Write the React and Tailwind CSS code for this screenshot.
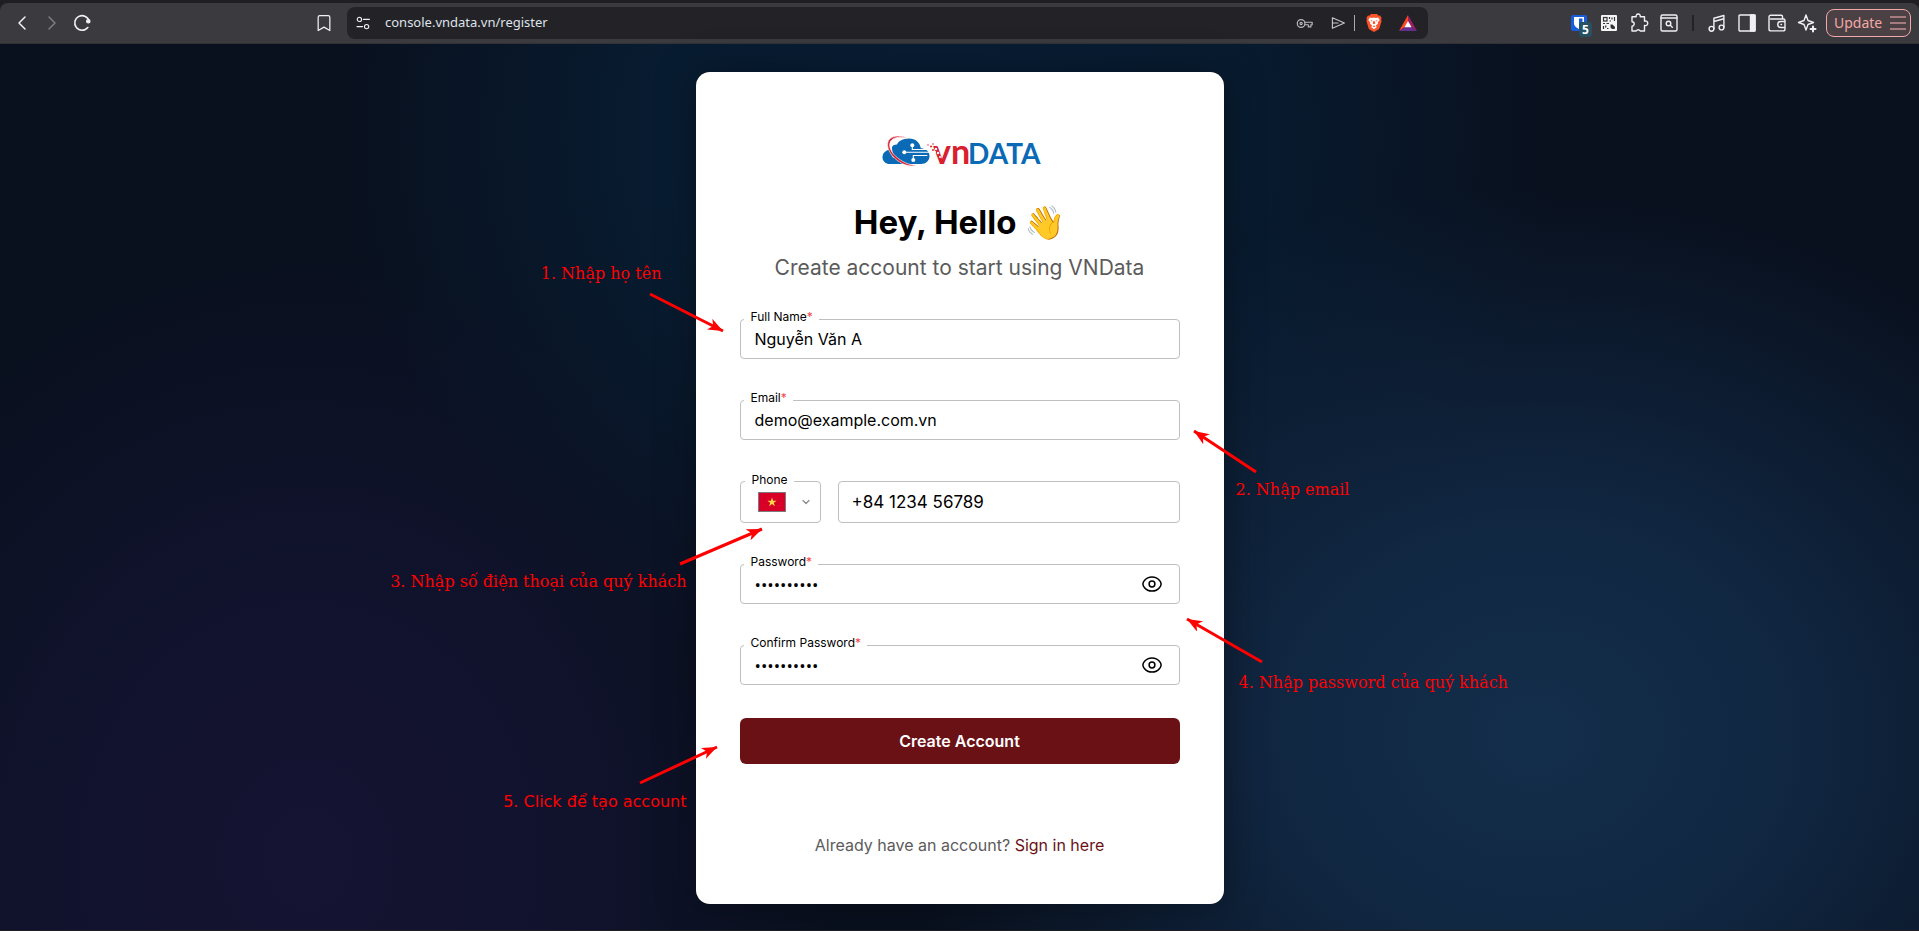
import React, {useState} from 'react';
import {Bookmark, ChevronDown, ChevronLeft, ChevronRight} from 'lucide-react';

function ToolButton({label, className = 'w-[30px]', children}) {
  return (
    <button
      aria-label={label}
      className={`flex h-8 shrink-0 items-center justify-center text-[#f0f0f3] ${className}`}
    >
      {children}
    </button>
  );
}

function Stroke({children, className = 'h-5 w-5'}) {
  return (
    <svg
      className={className}
      viewBox="0 0 20 20"
      fill="none"
      stroke="currentColor"
      strokeWidth="1.4"
      strokeLinecap="round"
      strokeLinejoin="round"
    >
      {children}
    </svg>
  );
}

function BraveIcon() {
  return (
    <svg className="h-[18px] w-4" viewBox="0 0 16 18">
      <path
        d="M5 0h6l1.600 1.800 1.500-.2L15.600 4l-.5 1.600.5 1.500-2.200 7.200c-.2.6-.6 1-1 1.300L8 18l-4.400-2.400c-.4-.3-.8-.7-1-1.300L.4 7.100l.5-1.500L.4 4l1.500-2.400 1.500.2z"
        fill="#fb542b"
      />
      <path
        d="M4 3.600l2.200.3L8 3.500l1.800.4 2.200-.3 1.700 2.300-2 2.600.3 1.300-2.200 1.700 1 1.400L8 15.200l-2.800-2.300 1-1.400L4 9.800l.3-1.300-2-2.600z"
        fill="#fff"
      />
      <path
        d="M4.300 6l2 .5-.2 1.200zM11.700 6l-2 .5.2 1.200zM7.100 7.200h1.800l.4 2.200L8 10.300l-1.300-.9zM6.500 12.300L8 11.600l1.500.7L8 13.200z"
        fill="#fb542b"
      />
    </svg>
  );
}

function BatIcon() {
  return (
    <svg className="h-4 w-[18px]" viewBox="0 0 18 16">
      <path d="M9 0L0 16l6-4 3-5z" fill="#ff4724" />
      <path d="M9 0l9 16-6-4-3-5z" fill="#9e1f63" />
      <path d="M0 16h18l-6-4H6z" fill="#662d91" />
      <path d="M9 6l3.600 6.200H5.400z" fill="#fff" />
    </svg>
  );
}

function BitwardenIcon() {
  return (
    <span className="relative">
      <svg className="h-4 w-4" viewBox="0 0 16 16">
        <rect width="16" height="16" rx="2" fill="#175ddc" />
        <path
          d="M3 2h10v6.500c0 2.500-2.500 4.300-5 5.500-2.500-1.200-5-3-5-5.500z"
          fill="#fff"
        />
        <path d="M8 3.500h3.500v5c0 1.500-1.600 2.900-3.500 3.900z" fill="#175ddc" />
      </svg>
      <span className="absolute top-[7px] left-2 rounded-[3px] bg-[#275063] px-[3px] text-[12px] leading-[15px] font-bold text-white">
        5
      </span>
    </span>
  );
}

function QrIcon() {
  return (
    <svg className="h-4 w-4" viewBox="0 0 16 16">
      <rect width="16" height="16" rx="1" fill="#f5f5f7" />
      <g fill="none" stroke="#333236" strokeWidth="1.2">
        <rect x="2.5" y="2.5" width="3.500" height="3.500" />
        <path d="M8.500 2v2M8.500 6h1.500M11 2.500v2M13.500 2v4M2 8.500h2M5.500 8.500h2.500M2.500 11v3M5 10.500l-.5 2M6 13.500h1.500" />
      </g>
      <path d="M9.500 9.500h2l2.500 2.500v1.500l-1 .5h-2l-1.500-1.500z" fill="#333236" />
    </svg>
  );
}

function BrowserBar() {
  return (
    <div className="bg-[#1f1e23] pt-[3px]">
      <header className="flex h-[41px] items-center rounded-t-lg border-b border-[#323136] bg-[#3b3a3f] font-['Noto_Sans',sans-serif]">
        <div className="flex w-[347px] shrink-0 items-center pr-2 pl-[7px]">
          <ToolButton label="Back">
            <ChevronLeft size={24} strokeWidth={1.5} />
          </ToolButton>
          <button
            aria-label="Forward"
            disabled
            className="flex h-8 w-[30px] items-center justify-center text-[#7d7c82]"
          >
            <ChevronRight size={24} strokeWidth={1.5} />
          </button>
          <ToolButton label="Reload">
            <Stroke>
              <path d="M15.800 14.500A7.300 7.300 0 1 1 17.200 8.500" strokeWidth="1.6" />
              <circle cx="16.3" cy="8.3" r="1.6" fill="currentColor" />
            </Stroke>
          </ToolButton>
          <div className="flex-1" />
          <ToolButton label="Bookmark this tab">
            <Bookmark size={20} strokeWidth={1.5} />
          </ToolButton>
        </div>

        <div className="flex h-8 min-w-0 flex-1 items-center rounded-lg bg-[#232227] pr-[3px]">
          <ToolButton label="Site information" className="w-8">
            <Stroke className="h-4 w-4">
              <circle cx="5.5" cy="5.5" r="2.7" />
              <path d="M10.500 5.500H18" />
              <circle cx="14.5" cy="14.5" r="2.7" />
              <path d="M2.500 14.500H9.500" />
            </Stroke>
          </ToolButton>
          <input
            aria-label="Address"
            defaultValue="console.vndata.vn/register"
            className="h-8 min-w-0 flex-1 bg-transparent pb-0.5 pl-1.5 text-[13px] text-[#dfe3ea] outline-none"
          />
          <div className="flex gap-0.5">
            <ToolButton label="Passwords" className="w-8">
              <Stroke className="h-[17px] w-[17px] text-[#b9b9be]">
                <circle cx="6" cy="10" r="4.5" />
                <circle cx="6" cy="10" r="1.3" />
                <path d="M10.500 8.500H19v3h-1.500v2.500h-3v-2.500h-4" />
              </Stroke>
            </ToolButton>
            <ToolButton label="Send to your devices" className="w-8">
              <Stroke className="h-4 w-4 text-[#c8c8cc]">
                <path d="M3 3.500L18 10 3 16.500zM3 10h7" />
              </Stroke>
            </ToolButton>
          </div>
          <div className="mr-0.5 h-4 w-px bg-[#a9a9ad]" />
          <ToolButton label="Brave Shields" className="w-[34px]">
            <BraveIcon />
          </ToolButton>
          <ToolButton label="Brave Rewards" className="w-[34px]">
            <BatIcon />
          </ToolButton>
        </div>

        <div className="flex w-[491px] shrink-0 items-center justify-end pr-2">
          <ToolButton label="Bitwarden">
            <BitwardenIcon />
          </ToolButton>
          <ToolButton label="QR code">
            <QrIcon />
          </ToolButton>
          <ToolButton label="Extensions">
            <Stroke>
              <path d="M3 3.800h4.200a2.100 2.100 0 1 1 4 0h4.300v4.400a2.300 2.300 0 1 1 0 4.200v5.600h-4.300a2.200 2.200 0 0 0-4 0H3v-4.800a2.200 2.200 0 1 0 0-4.400z" />
            </Stroke>
          </ToolButton>
          <ToolButton label="Search tabs">
            <Stroke>
              <rect x="2" y="2" width="16" height="16" rx="1.5" />
              <path d="M2 5h16" />
              <circle cx="9.5" cy="10.5" r="2.3" />
              <path d="M11.300 12.300l2 2" />
            </Stroke>
          </ToolButton>
          <div className="mx-2 h-4 w-0.5 bg-[#232227]" />
          <ToolButton label="Playlist">
            <Stroke>
              <circle cx="4.5" cy="15.8" r="2.4" />
              <circle cx="14.5" cy="14.5" r="2.4" />
              <path d="M6.900 15.800V5.200L16.900 2.500v12M6.900 8.500l10-2.700" />
            </Stroke>
          </ToolButton>
          <ToolButton label="Sidebar">
            <Stroke>
              <rect x="2" y="2" width="16" height="16" rx="1" />
              <path d="M13.500 2H18v16h-4.500z" fill="currentColor" />
            </Stroke>
          </ToolButton>
          <ToolButton label="Wallet">
            <Stroke>
              <path d="M15.500 6V3.500A1.300 1.300 0 0 0 14.200 2.200H3.700a1.700 1.700 0 0 0-1.700 1.700v12a2 2 0 0 0 2 2h12a2 2 0 0 0 2-2V7.500A1.500 1.500 0 0 0 16.500 6H3.500M18 8.500h-4.200a3 3 0 0 0 0 6H18zM14 11.500h.5" />
            </Stroke>
          </ToolButton>
          <ToolButton label="Leo AI">
            <Stroke>
              <path d="M9 2l2 5.500L16.500 9.500 11 11.500 9 17 7 11.500 1.500 9.500 7 7.500z" />
              <path d="M16 13.500v5M13.500 16h5" strokeWidth="2" />
            </Stroke>
          </ToolButton>
          <button className="ml-1 flex h-7 w-[85px] items-center justify-between rounded-lg border border-[#f2a9a7] bg-[#4b4044] pr-1 pl-[7px] text-sm text-[#f2a9a7]">
            Update
            <svg className="h-4 w-4" viewBox="0 0 16 16" stroke="#c48f90" strokeWidth="1.5">
              <path d="M0 2h16M0 8h16M0 14h16" />
            </svg>
          </button>
        </div>
      </header>
    </div>
  );
}

function Logo() {
  return (
    <svg
      className="mx-auto h-10 w-40 overflow-visible"
      viewBox="0 0 160 40"
      role="img"
      aria-label="vnDATA"
    >
      <path
        d="M10 31c-4.500 0-7.500-3-7.500-6.800 0-3.600 2.500-6.500 6-7.200l5 0L24 31z"
        fill="#0a6ab5"
      />
      <path
        d="M22 31C14 26 10.500 20 11.500 15c.6-2.500 3-3.500 5.500-3.500C18.500 8 23 5.500 29 5.500c6.500 0 11 4 11.800 9.800 5.200.2 8.700 3.300 8.700 7.700 0 4.600-3.500 8-8.500 8z"
        fill="#0a6ab5"
      />
      <path
        d="M14 24.500c-4-6-4.500-13 1-17.500"
        stroke="#fff"
        strokeWidth="2"
        fill="none"
      />
      <g stroke="#fff" strokeWidth="1.1" fill="none">
        <path d="M32.300 12.500v4h15M24.300 19.300h26M33.300 27v-4.500h14" />
      </g>
      <g fill="#fff">
        <circle cx="32.3" cy="12.2" r="2" />
        <circle cx="24.3" cy="19.300" r="2" />
        <circle cx="33.3" cy="27" r="2" />
      </g>
      <path
        d="M27.500 5.300C20 1.500 9.500 2.500 7.800 9.500c-1.800 8 7 19 18.200 22.500 4 1.200 8 1.200 11 .2-4 .2-7.500-.7-11-2.200C16 25.500 8.500 17.500 9.800 10.500 11 4.500 19 2.700 27.500 5.300z"
        fill="#d9202f"
        stroke="#fff"
        strokeWidth=".6"
      />
      <text
        x="53"
        y="31"
        fill="#d9202f"
        className="font-['Lato',sans-serif] text-[34px] font-bold"
      >
        vn
      </text>
      <text
        x="88"
        y="31"
        fill="#0a6ab5"
        className="font-['Lato',sans-serif] text-[28px] font-bold"
      >
        DATA
      </text>
      <g fill="#fff">
        <circle cx="56" cy="16" r="1.2" />
        <circle cx="58" cy="20" r="1.2" />
        <circle cx="55" cy="19" r="1" />
        <circle cx="60" cy="24" r="1" />
      </g>
      <g fill="#d9202f">
        <circle cx="48" cy="12" r=".7" />
        <circle cx="51" cy="13.500" r="1" />
        <circle cx="53" cy="11" r=".8" />
        <circle cx="53" cy="17" r=".9" />
      </g>
    </svg>
  );
}

function FieldLabel({htmlFor, required, children}) {
  return (
    <label
      htmlFor={htmlFor}
      className="absolute -top-2.5 left-1 z-10 bg-white pr-1.5 pl-[7px] text-xs leading-4 text-black"
    >
      {children}
      {required && <span className="text-[#f8444a]">*</span>}
    </label>
  );
}

function TextField({id, label, type = 'text', value}) {
  return (
    <div className="relative">
      <FieldLabel htmlFor={id} required>
        {label}
      </FieldLabel>
      <input
        id={id}
        type={type}
        defaultValue={value}
        className="block h-10 w-full rounded border border-[#bfbfbf] bg-white px-3.5 text-base text-black"
      />
    </div>
  );
}

function PasswordField({id, label, value}) {
  const [visible, setVisible] = useState(false);

  return (
    <div className="relative">
      <FieldLabel htmlFor={id} required>
        {label}
      </FieldLabel>
      <input
        id={id}
        type={visible ? 'text' : 'password'}
        defaultValue={value}
        className="block h-10 w-full rounded border border-[#bfbfbf] bg-white pr-12 pl-3.5 font-['Open_Sans',sans-serif] text-[17px] text-black"
      />
      <button
        type="button"
        aria-label="Show password"
        onClick={() => setVisible(!visible)}
        className="absolute top-2.5 right-[18px] text-black"
      >
        <svg
          className="h-5 w-5"
          viewBox="0 0 20 20"
          fill="none"
          stroke="currentColor"
          strokeWidth="1.5"
        >
          <path d="M.9 10c0-1.500.6-2.500 1.500-3.500C4 4.500 6.700 2.900 10 2.900s6 1.600 7.600 3.600c.9 1 1.500 2 1.500 3.500s-.6 2.500-1.500 3.500c-1.600 2-4.300 3.600-7.600 3.600s-6-1.600-7.600-3.600C1.500 12.500.9 11.500.9 10z" />
          <circle cx="10" cy="10" r="2.9" />
        </svg>
      </button>
    </div>
  );
}

function PhoneField() {
  return (
    <div className="flex gap-[17px]">
      <div className="relative flex h-[42px] w-[81px] shrink-0 items-center justify-between rounded border border-[#bfbfbf] pr-2 pl-[17px]">
        <FieldLabel htmlFor="country">Phone</FieldLabel>
        <svg className="h-5 w-7" viewBox="0 0 28 20">
          <rect x=".5" y=".5" width="27" height="19" fill="#d80027" stroke="#7b7b80" />
          <path
            d="M14 5.500l1.100 3.300h3.500l-2.800 2 1.100 3.400-2.900-2.100-2.900 2.100 1.100-3.400-2.800-2h3.500z"
            fill="#ffda44"
          />
        </svg>
        <ChevronDown size={12} strokeWidth={2.5} className="text-[#8a8a8a]" />
        <select
          id="country"
          defaultValue="vn"
          className="absolute inset-0 h-full w-full cursor-pointer opacity-0"
        >
          <option value="vn">Vietnam</option>
          <option value="us">United States</option>
        </select>
      </div>
      <input
        type="tel"
        aria-label="Phone number"
        defaultValue="+84 1234 56789"
        className="h-[42px] min-w-0 flex-1 rounded border border-[#bfbfbf] bg-white px-[13px] text-[17px] text-black"
      />
    </div>
  );
}

// tutorial steps, drawn over the page next to the card
const notes = [
  {text: '1. Nhập họ tên', className: "right-[562px] top-[190px] font-['DejaVu_Serif',serif]"},
  {text: '2. Nhập email', className: "left-[540px] top-[406px] font-['DejaVu_Serif',serif]"},
  {
    text: '3. Nhập số điện thoại của quý khách',
    className: "right-[537px] top-[498px] font-['DejaVu_Serif',serif]",
  },
  {
    text: '4. Nhập password của quý khách',
    className: "left-[543px] top-[599px] font-['DejaVu_Serif',serif]",
  },
  {text: '5. Click để tạo account', className: "right-[537px] top-[718px] font-['DejaVu_Sans',sans-serif]"},
];

const arrows = [
  [-46, 222, 27, 259],
  [560, 400, 498, 359],
  [-16, 492, 66, 457],
  [566, 590, 491, 547],
  [-56, 711, 21, 675],
];

function Notes() {
  return (
    <div className="pointer-events-none absolute inset-0">
      <svg className="absolute inset-0 h-full w-full overflow-visible">
        <defs>
          <marker
            id="head"
            markerUnits="userSpaceOnUse"
            markerWidth="16"
            markerHeight="12"
            refX="15"
            refY="6"
            orient="auto"
          >
            <path d="M0 0l15 6-15 6 4-6z" fill="#ff0000" />
          </marker>
        </defs>
        {arrows.map(([x1, y1, x2, y2]) => (
          <path
            key={y1}
            d={`M${x1} ${y1}L${x2} ${y2}`}
            stroke="#ff0000"
            strokeWidth="3"
            markerEnd="url(#head)"
          />
        ))}
      </svg>
      {notes.map((note) => (
        <p
          key={note.text}
          className={`absolute text-base leading-6 whitespace-nowrap text-[#ff0000] ${note.className}`}
        >
          {note.text}
        </p>
      ))}
    </div>
  );
}

export default function App() {
  return (
    <div className="flex min-h-screen flex-col">
      <BrowserBar />
      <main className="flex flex-1 items-start justify-center border-b-2 border-[#1f1e23] bg-[#09101e] bg-[radial-gradient(ellipse_28%_68%_at_16%_92%,#151433_0%,#141433cc_40%,#13133000_100%),radial-gradient(ellipse_34%_62%_at_80%_78%,#132e4b_0%,#122c4acc_40%,#0f254000_100%),radial-gradient(ellipse_32%_65%_at_49%_10%,#081d35_0%,#081c31_45%,#08162800_100%)] pt-7 pb-[26px] font-['Inter',sans-serif]">
        <div className="relative w-[528px] rounded-[14px] bg-white px-11 pt-[61px] pb-[47px] shadow-[0_0_40px_rgba(0,0,0,0.35)]">
          <Logo />
          <h1 className="mt-[29px] text-center text-[33px] leading-10 font-bold text-black">
            Hey, Hello 👋
          </h1>
          <p className="mt-3 text-center text-[21px] leading-7 text-[#5b5b5b]">
            Create account to start using VNData
          </p>

          <form className="mt-[37px]" onSubmit={(event) => event.preventDefault()}>
            <div className="flex flex-col gap-[41px]">
              <TextField id="name" label="Full Name" value="Nguyễn Văn A" />
              <TextField id="email" label="Email" type="email" value="demo@example.com.vn" />
              <PhoneField />
              <PasswordField id="password" label="Password" value="secret1234" />
              <PasswordField id="confirm" label="Confirm Password" value="secret1234" />
            </div>
            <button
              type="submit"
              className="mt-[33px] block h-[46px] w-full rounded-md bg-[#6a1116] text-base font-semibold text-white"
            >
              Create Account
            </button>
          </form>

          <p className="mt-[69px] text-center text-base leading-6 text-[#5b5b5b]">
            Already have an account?{' '}
            <a href="#signin" className="text-[#6a1116]">
              Sign in here
            </a>
          </p>
          <Notes />
        </div>
      </main>
    </div>
  );
}
